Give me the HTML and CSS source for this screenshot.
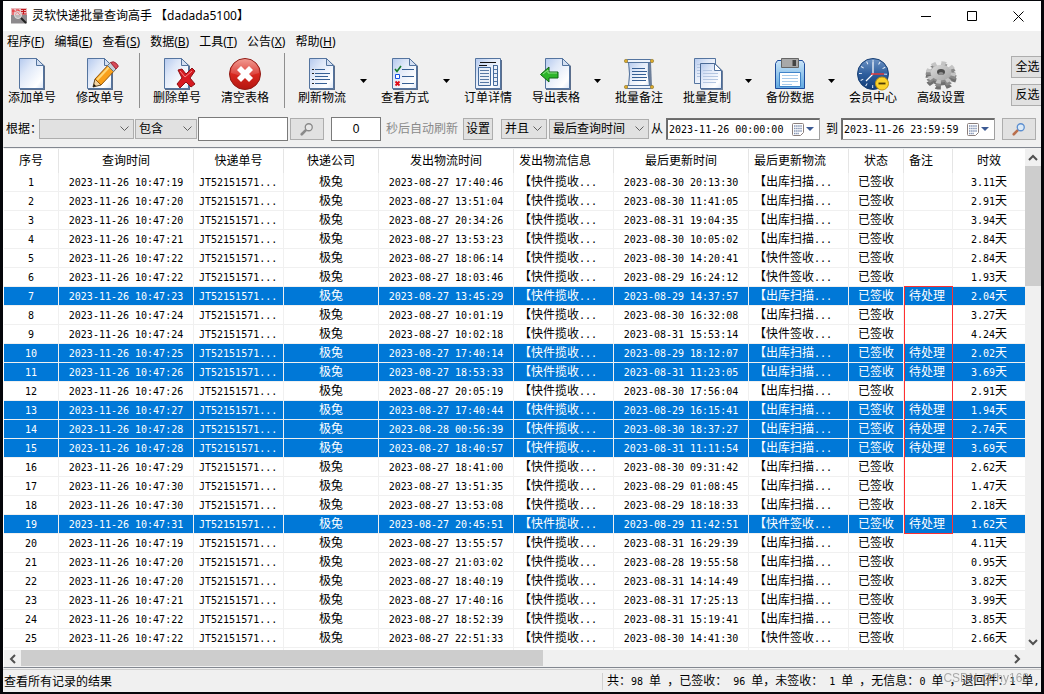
FILE: index.html
```html
<!DOCTYPE html>
<html lang="zh-CN">
<head>
<meta charset="utf-8">
<title>灵软快递批量查询高手</title>
<link rel="stylesheet" href="styles.css">
</head>
<body>
<svg class="defs" aria-hidden="true">
  <defs>
    <linearGradient id="paper" x1="0" y1="0" x2="1" y2="1"><stop offset="0" stop-color="#b4c9ee"/><stop offset=".35" stop-color="#dfe8f8"/><stop offset=".8" stop-color="#fff"/><stop offset="1" stop-color="#dce6f6"/></linearGradient>
    <linearGradient id="red" x1="0" y1="0" x2="0" y2="1"><stop offset="0" stop-color="#f08a80"/><stop offset=".5" stop-color="#d8281f"/><stop offset="1" stop-color="#b51610"/></linearGradient>
    <linearGradient id="steel" x1="0" y1="0" x2="1" y2="1"><stop offset="0" stop-color="#dcdcdc"/><stop offset="1" stop-color="#a4a4a4"/></linearGradient>
    <linearGradient id="clock" x1="0" y1="0" x2="0" y2="1"><stop offset="0" stop-color="#6e93c4"/><stop offset=".5" stop-color="#2f5f9e"/><stop offset="1" stop-color="#0f3a75"/></linearGradient>
    <linearGradient id="disk" x1="0" y1="0" x2="0" y2="1"><stop offset="0" stop-color="#c9e4f8"/><stop offset="1" stop-color="#5fa8e0"/></linearGradient>
    <symbol id="page" viewBox="0 0 32 32">
      <path d="M4 1h17l8 7v24H4z" fill="#5b6e8c"/>
      <path d="M3.500.5h17l7 7v23h-24z" fill="url(#paper)" stroke="#54749f"/>
      <path d="M20.500.5v7h7z" fill="#d3dff2" stroke="#54749f"/>
    </symbol>
    <symbol id="lens" viewBox="0 0 16 16">
      <path d="M2 14l5-5" stroke="currentColor" stroke-width="3" stroke-linecap="round"/>
      <circle cx="10" cy="6" r="4" fill="#dceaf7" stroke="#5d8fd0" stroke-width="1.500"/>
    </symbol>
    <symbol id="calendar" viewBox="0 0 12 13">
      <path d="M1.500.5h9q1 0 1 1v8l-3 3h-7q-1 0-1-1v-10q0-1 1-1z" fill="#fff" stroke="#8a7f7c"/>
      <path d="M2 3h8M2 5.500h8M2 8h8M2 10.500h5" stroke="#8494b4" stroke-width="1.500" stroke-dasharray="1.500 .6"/>
    </symbol>
  </defs>
</svg>

<main class="window">
  <header class="titlebar">
    <svg class="app-icon" viewBox="0 0 16 16" aria-hidden="true"><path d="M0 0h16v15.500H0z" fill="#8d8a8d"/><path d="M0 0h16v7H0z" fill="#e9b9bd"/><path d="M2 1v6M1 3h3M5 2h3v2M4 4h5M6 4l-2 3M6 4l3 3" stroke="#e3262b" fill="none"/><path d="M10 1.500h5M10 3.500h5M12.500 1v5M9.500 6h6" stroke="#c3161c" fill="none"/><circle cx="7" cy="7" r="3.500" fill="#e9e5e6" fill-opacity=".5" stroke="#ddd"/><path d="M10 10l5 5" stroke="#222" stroke-width="2"/></svg>
    <h1 class="title">灵软快递批量查询高手 【dadada5100】</h1>
    <button class="win-btn" aria-label="最小化"><svg viewBox="0 0 11 11"><path d="M0 5.500h10" /></svg></button>
    <button class="win-btn" aria-label="最大化"><svg viewBox="0 0 11 11"><path d="M.5.5h9v9h-9z"/></svg></button>
    <button class="win-btn" aria-label="关闭"><svg viewBox="0 0 11 11"><path d="M.5.5l10 10M10.500.5l-10 10"/></svg></button>
  </header>

  <nav class="menubar">
    <button>程序(<u>F</u>)</button><button>编辑(<u>E</u>)</button><button>查看(<u>S</u>)</button><button>数据(<u>B</u>)</button><button>工具(<u>T</u>)</button><button>公告(<u>X</u>)</button><button>帮助(<u>H</u>)</button>
  </nav>

  <div class="toolbar">
    <button class="tool"><svg viewBox="0 0 32 32"><use href="#page"/></svg>添加单号</button>
    <button class="tool"><svg viewBox="0 0 32 32"><use href="#page"/><path d="M9 29l2-8 6 6z" fill="#f3d4a3" stroke="#5e4520"/><path d="M9 29l1-3 2 2z" fill="#111"/><path d="M11 21L26 5l6 6-15 16z" fill="#f9a01b" stroke="#96590d"/><path d="M13 22L27 7" stroke="#ffd675" stroke-width="2"/><path d="M23.500 7.500l3-3 6 6-3 3z" fill="#c3cdd6" stroke="#68737c"/><path d="M26.500 4.500q3-2 6 1t1 4l-1.500 1.500z" fill="#d84a58" stroke="#9d2836"/></svg>修改单号</button>
    <span class="sep"></span>
    <button class="tool"><svg viewBox="0 0 32 32"><use href="#page"/><path d="M17 12l4-1 4 5 6-6 3 3-5 7 5 6-4 3-5-5-6 6-3-4 5-6z" fill="#d71920" stroke="#8d1015"/><path d="M19 13l5 6 7-6" fill="none" stroke="#f28b8b"/></svg>删除单号</button>
    <button class="tool"><svg viewBox="0 0 32 32"><circle cx="16" cy="16" r="15.500" fill="url(#red)" stroke="#8f1a14"/><path d="M2 15a14 14 0 0 1 28 0q-14 5-28 0z" fill="#fff" opacity=".15"/><path d="M8 12l4-4 4 4 4-4 4 4-4 4 4 4-4 4-4-4-4 4-4-4 4-4z" fill="#fff"/></svg>清空表格</button>
    <span class="sep"></span>
    <div class="split">
      <button class="tool"><svg viewBox="0 0 32 32"><use href="#page"/><path d="M9 11.500h10M9 15.500h15M9 18.500h13M9 21.500h15M9 25.500h12" stroke="#365f94"/><path d="M6 11.500h2M6 15.500h2M6 21.500h2M6 25.500h2" stroke="#222"/></svg>刷新物流</button>
      <button class="drop" aria-label="刷新物流选项"><svg viewBox="0 0 7 4"><path d="M0 0h7L3.500 4z"/></svg></button>
    </div>
    <div class="split">
      <button class="tool"><svg viewBox="0 0 32 32"><use href="#page"/><path d="M13 11.500h12M13 18.500h12M13 25.500h12" stroke="#365f94"/><path d="M6 11l2 2.500L12 8" fill="none" stroke="#137b2c" stroke-width="1.600"/><path d="M6.500 16.500h4v4h-4z" fill="#fff" stroke="#1450e6"/><path d="M6.500 23.500l4 4M10.500 23.500l-4 4" stroke="#e00d18" stroke-width="1.800"/></svg>查看方式</button>
      <button class="drop" aria-label="查看方式选项"><svg viewBox="0 0 7 4"><path d="M0 0h7L3.500 4z"/></svg></button>
    </div>
    <button class="tool"><svg viewBox="0 0 32 32"><path d="M4 2h26v30H4z" fill="#5b6e8c"/><path d="M3.500.5h25v30h-25z" fill="url(#paper)" stroke="#54749f"/><path d="M8 4.500h16M7 7.500h8M21 7.500h3" stroke="#111"/><path d="M6.500 9.500h12v18h-12zM21.500 7.500h4v20h-4z" fill="#e9eff8" stroke="#456b9d"/><path d="M8 12.500h9M8 15.500h9M8 18.500h9M8 21.500h9M8 24.500h9M22 11.500h3M22 15.500h3M22 19.500h3M22 23.500h3" stroke="#5678a4"/></svg>订单详情</button>
    <div class="split">
      <button class="tool"><svg viewBox="0 0 32 32"><g transform="translate(2)"><use href="#page" width="32" height="32"/></g><path d="M.5 16.500L9 9v5h9v6H9v4z" fill="#2db52a" stroke="#0e6413"/><path d="M3 16l5-4v3h9" fill="none" stroke="#8fe08a"/></svg>导出表格</button>
      <button class="drop" aria-label="导出表格选项"><svg viewBox="0 0 7 4"><path d="M0 0h7L3.500 4z"/></svg></button>
    </div>
    <button class="tool"><svg viewBox="0 0 32 32"><path d="M6 4h22l1 24H6z" fill="#6d7f9a"/><path d="M5.500 4h20q-1 12 1 24h-21q2-12 0-24z" fill="url(#paper)" stroke="#54749f"/><rect x="3.500" y="1.500" width="25" height="3" rx="1.500" fill="#eef3fb" stroke="#54749f"/><rect x="3.500" y="27.500" width="25" height="3" rx="1.500" fill="#eef3fb" stroke="#54749f"/><g fill="#dba92b" stroke="#7d661f" stroke-width=".5"><circle cx="3" cy="3" r="1.700"/><circle cx="29" cy="3" r="1.700"/><circle cx="3" cy="29" r="1.700"/><circle cx="29" cy="29" r="1.700"/></g><path d="M9 10.500h13M9 13.500h15M9 16.500h14M9 19.500h15M9 22.500h14" stroke="#365f94"/></svg>批量备注</button>
    <div class="split">
      <button class="tool"><svg viewBox="0 0 32 32"><path d="M3.500.5h21v25h-21z" fill="url(#paper)" stroke="#54749f"/><path d="M6 6.500h4M6 9.500h4M6 12.500h4M6 15.500h4M6 18.500h4" stroke="#b1c4e0"/><path d="M10 6h15l7 7v19H10z" fill="#6d7f9a"/><path d="M9.500 5.500h14l7 7v18h-21z" fill="url(#paper)" stroke="#4a6a97"/><path d="M23.500 5.500v7h7z" fill="#fff" stroke="#54749f"/><path d="M12 12.500h9M12 15.500h15M12 18.500h15M12 21.500h15M12 24.500h13" stroke="#b5c7e2"/></svg>批量复制</button>
      <button class="drop" aria-label="批量复制选项"><svg viewBox="0 0 7 4"><path d="M0 0h7L3.500 4z"/></svg></button>
    </div>
    <div class="split">
      <button class="tool"><svg viewBox="0 0 32 32"><path d="M3.500 2.500h25l2 3v25H1.500v-25z" fill="url(#disk)" stroke="#1d4a9a"/><path d="M7.500.5h17v9h-17z" fill="#a8a8a8" stroke="#666"/><path d="M18.500 2h3.500v6h-3.500z" fill="#444"/><path d="M5.500 14.500h21v14h-21z" fill="#fff" stroke="#3f83c8"/><path d="M8 17.500h16M8 20.500h16M8 23.500h16M8 26.500h10" stroke="#a8cbea"/></svg>备份数据</button>
      <button class="drop" aria-label="备份数据选项"><svg viewBox="0 0 7 4"><path d="M0 0h7L3.500 4z"/></svg></button>
    </div>
    <button class="tool"><svg viewBox="0 0 32 32"><circle cx="16" cy="16" r="15.500" fill="url(#clock)" stroke="#173f74"/><circle cx="16" cy="16" r="12.500" fill="none" stroke="#e8f0fa" stroke-width="3" stroke-dasharray="1 5.545" transform="rotate(-92 16 16)"/><path d="M16 16V4.500M16 16l-7 7" stroke="#fff" stroke-width="1.200"/><path d="M14 16h13" stroke="#e23a3a" stroke-width="1.500"/><circle cx="25" cy="25.500" r="6.500" fill="#fbd32b" stroke="#c19415"/><path d="M21.500 25.500h7" stroke="#4e3a06" stroke-width="1.800"/></svg>会员中心</button>
    <button class="tool"><svg viewBox="0 0 32 32">
      <g fill="#707070" stroke="#707070" transform="translate(16 20) scale(1 .75)"><circle r="10" stroke="none"/><circle r="12.500" fill="none" stroke-width="6" stroke-dasharray="5 4.817"/></g>
      <g fill="#8a8a8a" stroke="#8a8a8a" transform="translate(16 17) scale(1 .75)"><circle r="10" stroke="none"/><circle r="12.500" fill="none" stroke-width="6" stroke-dasharray="5 4.817"/></g>
      <g fill="#c4c4c4" stroke="#c4c4c4" transform="translate(16 14.500) scale(1 .75)"><circle r="10.500" fill="url(#steel)" stroke="none"/><circle r="12.500" fill="none" stroke-width="5" stroke-dasharray="4.600 5.217"/></g>
      <ellipse cx="16" cy="14" rx="4" ry="3" fill="#4c4c4c"/><ellipse cx="16" cy="15.500" rx="2.500" ry="1.500" fill="#8d8d8d"/></svg>高级设置</button>
    <div class="select-all"><button class="btn">全选</button><button class="btn">反选</button></div>
  </div>

  <form class="filter">
    <label class="by" for="field">根据：</label>
    <select id="field" class="w-field"><option></option></select>
    <select class="w-op" aria-label="条件"><option>包含</option></select>
    <input class="box w-key" type="text" aria-label="关键字">
    <button type="button" class="btn find off" aria-label="查找" disabled><svg><use href="#lens"/></svg></button>
    <input class="box w-sec" id="secs" type="text" value="0">
    <label class="muted" for="secs">秒后自动刷新</label>
    <button type="button" class="btn set">设置</button>
    <select class="w-and" aria-label="逻辑"><option>并且</option></select>
    <select class="w-time" aria-label="时间字段"><option>最后查询时间</option></select>
    <label for="from">从</label>
    <span class="date"><input id="from" type="text" value="2023-11-26 00:00:00"><button type="button" aria-label="选择开始日期"><svg class="cal"><use href="#calendar"/></svg><svg class="tri" viewBox="0 0 8 4"><path d="M0 0h8L4 4z"/></svg></button></span>
    <label class="until" for="to">到</label>
    <span class="date"><input id="to" type="text" value="2023-11-26 23:59:59"><button type="button" aria-label="选择结束日期"><svg class="cal"><use href="#calendar"/></svg><svg class="tri" viewBox="0 0 8 4"><path d="M0 0h8L4 4z"/></svg></button></span>
    <button type="button" class="btn find go" aria-label="查询"><svg><use href="#lens"/></svg></button>
  </form>

  <section class="grid">
    <div class="view">
      <table class="records">
        <colgroup><col class="c55"><col class="c135"><col class="c90"><col class="c95"><col class="c135"><col class="c100"><col class="c135"><col class="c100"><col class="c55"><col class="c49"><col></colgroup>
        <thead><tr><th>序号</th><th>查询时间</th><th>快递单号</th><th>快递公司</th><th>发出物流时间</th><th class="left">发出物流信息</th><th>最后更新时间</th><th class="left">最后更新物流</th><th>状态</th><th class="left">备注</th><th>时效</th></tr></thead>
        <tbody id="rows"></tbody>
      </table>
      <div class="mark"></div>
    </div>
    <div class="vbar">
      <button aria-label="向上"><svg viewBox="0 0 8 6"><path d="M0 5l4-4 4 4"/></svg></button>
      <div class="thumb"></div>
      <button aria-label="向下"><svg viewBox="0 0 8 6"><path d="M0 1l4 4 4-4"/></svg></button>
    </div>
    <div class="hbar">
      <button aria-label="向左"><svg viewBox="0 0 6 8"><path d="M5 0L1 4l4 4"/></svg></button>
      <div class="thumb"></div>
      <button aria-label="向右"><svg viewBox="0 0 6 8"><path d="M1 0l4 4-4 4"/></svg></button>
    </div>
  </section>

  <footer class="status">
    <span class="hint">查看所有记录的结果</span>
    <span class="totals">共：<b>98 </b>单<b> </b>，已签收：<b> 96 </b>单，未签收：<b> 1 </b>单<b> </b>，无信息：<b>0 </b>单<b> </b>，退回件：<b>1 </b>单<b>,</b></span>
    <span class="watermark">CSDN @fhy168</span>
  </footer>
</main>
<script src="rows.js"></script>
</body>
</html>
```

FILE: styles.css
```css
* { box-sizing: border-box; }

body {
  margin: 0;
  height: 100vh;
  padding: 1px 3px 2px;
  background: #05060a;
  color: #000;
  font: 12px/16px "Liberation Sans", "Noto Sans CJK SC", sans-serif;
}

button, input, select { font: inherit; color: inherit; margin: 0; }
button { padding: 0; border: 0; background: none; }
.defs { position: absolute; width: 0; height: 0; }

.window {
  display: flex;
  flex-direction: column;
  height: 100%;
  background: #f0f0f0;
  overflow: hidden;
}

.titlebar {
  display: flex;
  flex: none;
  align-items: center;
  height: 30px;
  padding-left: 8px;
  background: #fff;
}
.app-icon { width: 16px; height: 16px; margin-right: 5px; }
.title { flex: 1; margin: 0; font: 12px/16px "Noto Sans", "Noto Sans CJK SC", sans-serif; }
.win-btn { display: flex; align-items: center; justify-content: center; width: 46px; height: 28px; }
.win-btn svg { width: 11px; height: 11px; fill: none; stroke: #000; }

.menubar {
  display: flex;
  flex: none;
  gap: 10px;
  height: 20px;
  padding: 1px 0 0 4px;
  font: 12px/16px "Noto Sans", "Noto Sans CJK SC", sans-serif;
}

.toolbar { display: flex; flex: none; height: 62px; padding-top: 2px; }
.tool {
  display: flex;
  flex: none;
  flex-direction: column;
  align-items: center;
  width: 68px;
  padding: 5px 15px 0 5px;
  white-space: nowrap;
}
.tool svg { width: 32px; height: 32px; overflow: visible; }
.sep { flex: none; width: 1px; height: 55px; margin-right: 8px; background: #8f8f8f; }
.split { display: flex; flex: none; }
.split .tool { width: 63px; padding-right: 10px; }
.drop { display: flex; align-items: center; width: 20px; height: 55px; padding-left: 4px; }
.drop svg { width: 7px; height: 4px; }
.select-all { display: flex; flex-direction: column; gap: 6px; margin-left: auto; padding-top: 3px; }
.btn { border: 1px solid #adadad; background: #e1e1e1; white-space: nowrap; }
.select-all .btn { width: 30px; height: 22px; border-right: 0; padding-left: 2px; }

.filter {
  display: flex;
  flex: none;
  align-items: center;
  height: 34px;
  padding: 0 5px 2px 3px;
  white-space: nowrap;
}
.by { width: 33px; }
select {
  appearance: none;
  height: 20px;
  padding: 0 0 0 3px;
  border: 1px solid #adadad;
  border-radius: 0;
  background: #e1e1e1 url("data:image/svg+xml,%3Csvg xmlns='http://www.w3.org/2000/svg' width='9' height='6'%3E%3Cpath d='M.5.5l4 4 4-4' fill='none' stroke='%23606060'/%3E%3C/svg%3E") no-repeat right 4px center;
}
.w-field { width: 95px; margin-right: 1px; }
.w-op { width: 62px; margin-right: 1px; }
.box { height: 24px; border: 1px solid #7a7a7a; background: #fff; padding: 0 3px; }
.w-key { width: 90px; margin-right: 2px; }
.find { display: flex; align-items: center; justify-content: center; width: 34px; height: 22px; }
.find svg { width: 14px; height: 14px; }
.off { margin-right: 7px; color: #8a8a8a; filter: grayscale(1); }
.go { margin-left: auto; }
.go svg { color: #b96f4d; }
.w-sec { width: 50px; margin-right: 5px; text-align: center; }
.muted { width: 77px; color: #8a8a8a; }
.set { width: 30px; height: 22px; margin-right: 8px; }
.w-and { width: 46px; margin-right: 2px; }
.w-time { width: 100px; margin-right: 2px; }
.until { margin-left: 2px; }
.date {
  display: flex;
  align-items: center;
  width: 154px;
  height: 22px;
  margin: 0 4px 0 3px;
  border: 1px solid;
  border-color: #707070 #a0a0a0 #a0a0a0 #707070;
  box-shadow: inset 1px 1px #696969;
  background: #fff;
  font: 10px/16px "DejaVu Sans Mono", monospace;
}
.date input { flex: 1; min-width: 0; height: 18px; padding: 0 0 0 2px; border: 0; background: none; }
.date button { display: flex; align-items: center; gap: 2px; width: 27px; height: 18px; }
.cal { width: 12px; height: 13px; }
.tri { width: 8px; height: 4px; fill: #3c5a94; }

.grid {
  display: grid;
  grid-template: minmax(0, 1fr) 17px / minmax(0, 1fr) 16px;
  flex: 1;
  min-height: 0;
  padding-top: 1px;
  border-top: 1px solid #828790;
  border-bottom: 1px solid #828790;
  border-left: 1px solid #fff;
  background: #f0f0f0;
}
.view { position: relative; overflow: hidden; background: #fff; }
.records { width: 100%; border-collapse: separate; border-spacing: 0; table-layout: fixed; }
.c135 { width: 135px; }
.c90 { width: 90px; }
.c95 { width: 95px; }
.c100 { width: 100px; }
.c55 { width: 55px; }
.c49 { width: 49px; }
th, td { padding: 0; text-align: center; white-space: nowrap; overflow: hidden; font-weight: normal; }
th { height: 24px; border-right: 1px solid #e5e5e5; }
td { height: 19px; line-height: 18px; border-right: 1px solid #f0f0f0; border-bottom: 1px solid #f0f0f0; }
th:last-child, td:last-child { border-right: 0; }
.left { text-align: left; padding-left: 5px; }
.num, .totals b { font: 10px/16px "DejaVu Sans Mono", monospace; }
.picked td { background: #0078d7; color: #fff; }
.mark {
  position: absolute;
  z-index: 1;
  top: 137px;
  right: 72px;
  width: 49px;
  height: 248px;
  border: 1px solid #ff3030;
}

.vbar { display: flex; flex-direction: column; }
.hbar { display: flex; grid-column: 1 / -1; padding: 0 16px 1px 0; }
.vbar button, .hbar button { display: flex; flex: none; align-items: center; justify-content: center; width: 17px; height: 17px; }
.vbar button { width: 16px; }
.vbar svg { width: 8px; height: 6px; }
.hbar svg { width: 6px; height: 8px; }
.vbar svg, .hbar svg { overflow: visible; fill: none; stroke: #505050; stroke-width: 2; }
.thumb { background: #cdcdcd; }
.vbar .thumb { height: 24%; margin-bottom: auto; }
.hbar .thumb { width: 51.1%; margin-right: auto; }

.status {
  position: relative;
  display: flex;
  flex: none;
  align-items: center;
  height: 23px;
  margin-top: 1px;
  padding-top: 1px;
  border-top: 1px solid #d0d0d0;
}
.hint { flex: 1; padding-left: 1px; }
.totals { flex: none; width: 439px; padding-left: 4px; border-left: 1px solid #d0d0d0; white-space: pre; }
.watermark {
  position: absolute;
  right: 12px;
  top: 0;
  color: #8c8c8c;
  opacity: .7;
  font-size: 12px;
}
```

FILE: rows.js
```js
const T = "出库扫描", Q = "快件签收";
const records = [
  ["47:19", "27 17:40:46", "30 20:13:30", T, "3.11"],
  ["47:20", "27 13:51:04", "30 11:41:05", T, "2.91"],
  ["47:20", "27 20:34:26", "31 19:04:35", T, "3.94"],
  ["47:21", "27 13:53:23", "30 10:05:02", T, "2.84"],
  ["47:22", "27 18:06:14", "30 14:20:41", Q, "2.84"],
  ["47:22", "27 18:03:46", "29 16:24:12", Q, "1.93"],
  ["47:23", "27 13:45:29", "29 14:37:57", T, "2.04", 1],
  ["47:24", "27 10:01:19", "30 16:32:08", T, "3.27"],
  ["47:24", "27 10:02:18", "31 15:53:14", Q, "4.24"],
  ["47:25", "27 17:40:14", "29 18:12:07", T, "2.02", 1],
  ["47:26", "27 18:53:33", "31 11:23:05", T, "3.69", 1],
  ["47:26", "27 20:05:19", "30 17:56:04", T, "2.91"],
  ["47:27", "27 17:40:44", "29 16:15:41", T, "1.94", 1],
  ["47:28", "28 00:56:39", "30 18:37:27", T, "2.74", 1],
  ["47:28", "27 18:40:57", "31 11:11:54", T, "3.69", 1],
  ["47:29", "27 18:41:00", "30 09:31:42", T, "2.62"],
  ["47:30", "27 13:51:35", "29 01:08:45", T, "1.47"],
  ["47:30", "27 13:53:08", "29 18:18:33", T, "2.18"],
  ["47:31", "27 20:45:51", "29 11:42:51", Q, "1.62", 1],
  ["47:19", "27 13:55:57", "31 16:29:39", T, "4.11"],
  ["47:20", "27 21:03:02", "28 19:55:58", T, "0.95"],
  ["47:20", "27 18:40:19", "31 14:14:49", T, "3.82"],
  ["47:21", "27 17:40:16", "31 17:25:13", T, "3.99"],
  ["47:22", "27 18:52:39", "31 15:19:41", T, "3.85"],
  ["47:22", "27 22:51:33", "30 14:41:30", Q, "2.66"],
];

const num = (s) => `<span class="num">${s}</span>`;
const cell = (s, cls = "") => `<td class="${cls}">${s}</td>`;

document.getElementById("rows").innerHTML = records
  .map(([asked, sent, updated, info, days, picked], i) =>
    `<tr class="${picked ? "picked" : ""}">` +
    cell(num(i + 1)) +
    cell(num("2023-11-26 10:" + asked)) +
    cell(num("JT52151571..."), "left") +
    cell("极兔") +
    cell(num("2023-08-" + sent)) +
    cell("【快件揽收" + num("..."), "left") +
    cell(num("2023-08-" + updated)) +
    cell("【" + info + num("..."), "left") +
    cell("已签收") +
    cell(picked ? "待处理" : "", "left") +
    cell(num(days) + "天") +
    "</tr>")
  .join("") + "<tr>" + cell("").repeat(11) + "</tr>";
```
